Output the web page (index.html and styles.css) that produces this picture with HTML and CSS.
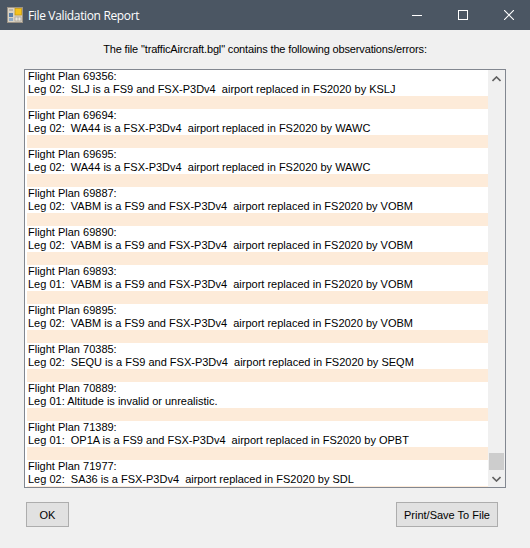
FILE: index.html
```html
<!DOCTYPE html>
<html>
<head>
<meta charset="utf-8">
<title>File Validation Report</title>
<link rel="stylesheet" href="styles.css">
</head>
<body>
<div class="window">
  <div class="titlebar">
    <svg class="app-icon" width="16" height="16" viewBox="0 0 16 16">
      <rect x="0.5" y="0.5" width="15" height="15" fill="#d9d2c4" stroke="#9c9386"/>
      <rect x="8" y="1.5" width="6.5" height="6.5" fill="#f4c21b" stroke="#c79a10" stroke-width="0.8"/>
      <rect x="2" y="6" width="4" height="4" fill="#5b7fa8"/>
      <rect x="2" y="11" width="4" height="3" fill="#8fa9c4"/>
      <rect x="8" y="10" width="6" height="4" fill="#eae6dd" stroke="#9c9386" stroke-width="0.6"/>
      <line x1="11" y1="10" x2="11" y2="14" stroke="#9c9386" stroke-width="0.6"/>
      <line x1="2" y1="3" x2="6" y2="3" stroke="#9c9386" stroke-width="1"/>
    </svg>
    <span class="title">File Validation Report</span>
    <div class="controls">
      <div class="ctl"><svg width="10" height="10" viewBox="0 0 10 10"><line x1="0" y1="5.5" x2="10" y2="5.5" stroke="#fff" stroke-width="1"/></svg></div>
      <div class="ctl"><svg width="10" height="10" viewBox="0 0 10 10"><rect x="0.5" y="0.5" width="9" height="9" fill="none" stroke="#fff" stroke-width="1"/></svg></div>
      <div class="ctl"><svg width="10" height="10" viewBox="0 0 10 10"><path d="M0 0 L10 10 M10 0 L0 10" stroke="#fff" stroke-width="1.1"/></svg></div>
    </div>
  </div>
  <div class="content">
    <div class="header">The file "trafficAircraft.bgl" contains the following observations/errors:</div>
    <div class="listbox">
      <div class="items">
        <div class="item"><div class="line">Flight Plan 69356:</div><div class="line">Leg 02:  SLJ is a FS9 and FSX-P3Dv4  airport replaced in FS2020 by KSLJ</div><div class="sep"></div></div>
        <div class="item"><div class="line">Flight Plan 69694:</div><div class="line">Leg 02:  WA44 is a FSX-P3Dv4  airport replaced in FS2020 by WAWC</div><div class="sep"></div></div>
        <div class="item"><div class="line">Flight Plan 69695:</div><div class="line">Leg 02:  WA44 is a FSX-P3Dv4  airport replaced in FS2020 by WAWC</div><div class="sep"></div></div>
        <div class="item"><div class="line">Flight Plan 69887:</div><div class="line">Leg 02:  VABM is a FS9 and FSX-P3Dv4  airport replaced in FS2020 by VOBM</div><div class="sep"></div></div>
        <div class="item"><div class="line">Flight Plan 69890:</div><div class="line">Leg 02:  VABM is a FS9 and FSX-P3Dv4  airport replaced in FS2020 by VOBM</div><div class="sep"></div></div>
        <div class="item"><div class="line">Flight Plan 69893:</div><div class="line">Leg 01:  VABM is a FS9 and FSX-P3Dv4  airport replaced in FS2020 by VOBM</div><div class="sep"></div></div>
        <div class="item"><div class="line">Flight Plan 69895:</div><div class="line">Leg 02:  VABM is a FS9 and FSX-P3Dv4  airport replaced in FS2020 by VOBM</div><div class="sep"></div></div>
        <div class="item"><div class="line">Flight Plan 70385:</div><div class="line">Leg 02:  SEQU is a FS9 and FSX-P3Dv4  airport replaced in FS2020 by SEQM</div><div class="sep"></div></div>
        <div class="item"><div class="line">Flight Plan 70889:</div><div class="line">Leg 01: Altitude is invalid or unrealistic.</div><div class="sep"></div></div>
        <div class="item"><div class="line">Flight Plan 71389:</div><div class="line">Leg 01:  OP1A is a FS9 and FSX-P3Dv4  airport replaced in FS2020 by OPBT</div><div class="sep"></div></div>
        <div class="item"><div class="line">Flight Plan 71977:</div><div class="line">Leg 02:  SA36 is a FSX-P3Dv4  airport replaced in FS2020 by SDL</div><div class="sep"></div></div>
      </div>
      <div class="scrollbar">
        <div class="sb-btn"><svg width="9" height="6" viewBox="0 0 9 6"><path d="M0.5 5 L4.5 1 L8.5 5" fill="none" stroke="#606060" stroke-width="1.6"/></svg></div>
        <div class="sb-track"></div>
        <div class="sb-thumb"></div>
        <div class="sb-btn"><svg width="9" height="6" viewBox="0 0 9 6"><path d="M0.5 1 L4.5 5 L8.5 1" fill="none" stroke="#606060" stroke-width="1.6"/></svg></div>
      </div>
    </div>
    <div class="buttons">
      <button class="btn btn-ok">OK</button>
      <button class="btn btn-print">Print/Save To File</button>
    </div>
  </div>
</div>
</body>
</html>
```

FILE: styles.css
```css
* { box-sizing: border-box; }
html, body { margin: 0; padding: 0; }
body {
  width: 530px;
  height: 548px;
  overflow: hidden;
  background: #f0f0f0;
  font-family: "Liberation Sans", Arial, sans-serif;
  font-size: 11px;
  color: #000;
}
.window {
  width: 530px;
  height: 548px;
  display: flex;
  flex-direction: column;
  overflow: hidden;
  background: #f0f0f0;
}
.titlebar {
  height: 30px;
  flex: none;
  background: #4b5663;
  display: flex;
  align-items: center;
  padding-left: 7px;
}
.app-icon { flex: none; }
.title {
  margin-left: 5px;
  color: #fff;
  font-family: "Open Sans", "Noto Sans", sans-serif;
  font-size: 12px;
  letter-spacing: -0.35px;
}
.controls {
  margin-left: auto;
  margin-right: -2px;
  display: flex;
  height: 30px;
}
.ctl {
  width: 46px;
  height: 30px;
  display: flex;
  align-items: center;
  justify-content: center;
}
.content {
  flex: 1;
  display: flex;
  flex-direction: column;
}
.header {
  margin-top: 13px;
  height: 13px;
  line-height: 13px;
  text-align: center;
  letter-spacing: -0.15px;
}
.listbox {
  margin-top: 13px;
  margin-left: 24px;
  width: 482px;
  height: 419px;
  border: 1px solid #828790;
  background: #fff;
  display: flex;
  overflow: hidden;
}
.items {
  flex: 1;
  overflow: hidden;
  padding-left: 2px;
}
.line {
  height: 13px;
  line-height: 13px;
  white-space: pre;
  padding-left: 1px;
}
.sep {
  height: 13px;
  background: #fdebd9;
}
.scrollbar {
  width: 17px;
  flex: none;
  background: #f0f0f0;
  display: flex;
  flex-direction: column;
}
.sb-btn {
  height: 17px;
  flex: none;
  display: flex;
  align-items: center;
  justify-content: center;
}
.sb-track { flex: 1; }
.sb-thumb {
  height: 17px;
  flex: none;
  margin: 0 1px;
  background: #cdcdcd;
}
.buttons {
  margin-top: 14px;
  display: flex;
  justify-content: space-between;
  padding: 0 32px 0 26px;
}
.btn {
  height: 25px;
  background: #e1e1e1;
  border: 1px solid #adadad;
  font-family: "Liberation Sans", Arial, sans-serif;
  font-size: 11px;
  color: #000;
  padding: 0;
  margin: 0;
}
.btn-ok { width: 43px; }
.btn-print { width: 102px; }
```
